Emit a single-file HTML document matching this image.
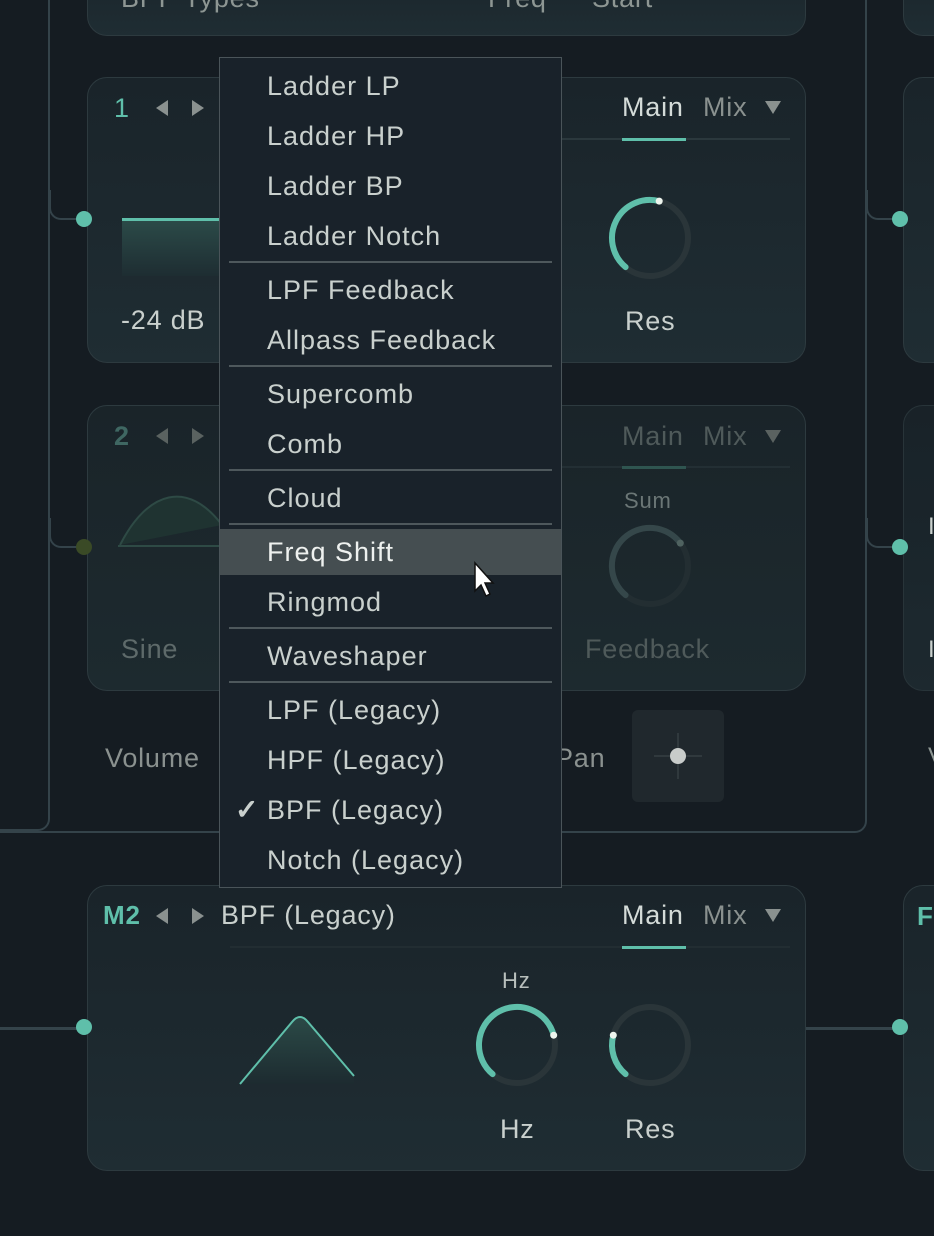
<!DOCTYPE html>
<html><head><meta charset="utf-8"><style>
*{margin:0;padding:0;box-sizing:border-box}
body{width:934px;height:1236px;background:#151c22;position:relative;overflow:hidden;font-family:"Liberation Sans",sans-serif;color:#c9d0cd}
.a{position:absolute}
.card{position:absolute;border:1.5px solid #2d3a3f;border-radius:20px;background:linear-gradient(#1a242a,#1f2d33)}
.t{position:absolute;white-space:nowrap;line-height:1;letter-spacing:0.8px}
.teal{color:#5fbfaa}
.tri{position:absolute;width:0;height:0;border-top:8px solid transparent;border-bottom:8px solid transparent}
.l{border-right:12px solid #8a918f}
.r{border-left:12px solid #8a918f}
.dot{position:absolute;width:16px;height:16px;border-radius:50%;background:#5fbfaa}
.menu{position:absolute;left:219px;top:57px;width:343px;height:831px;background:#19222a;border:1.5px solid #4a5459;padding-top:3px}
.it{height:50px;font-size:27px;letter-spacing:1px;line-height:50px;padding-left:47px;color:#c9d0cd;position:relative}
.sep{height:4px;position:relative}
.sep:before{content:"";position:absolute;left:9px;right:9px;top:0;height:2px;background:#4e585c}
.hl{background:#454e51;color:#eef1ef}
</style></head><body>
<!-- wires -->
<div class="a" style="left:-20px;top:-20px;width:70px;height:851px;border-right:2px solid #34434a;border-bottom:2px solid #34434a;border-bottom-right-radius:12px"></div>
<div class="a" style="left:-20px;top:-20px;width:887px;height:853px;border-right:2px solid #34434a;border-bottom:2px solid #34434a;border-bottom-right-radius:12px"></div>
<div class="a" style="left:49px;top:190px;width:36px;height:30px;border-left:2px solid #34434a;border-bottom:2px solid #34434a;border-bottom-left-radius:12px"></div>
<div class="a" style="left:49px;top:518px;width:36px;height:30px;border-left:2px solid #34434a;border-bottom:2px solid #34434a;border-bottom-left-radius:12px"></div>
<div class="a" style="left:866px;top:190px;width:36px;height:30px;border-left:2px solid #34434a;border-bottom:2px solid #34434a;border-bottom-left-radius:12px"></div>
<div class="a" style="left:866px;top:518px;width:36px;height:30px;border-left:2px solid #34434a;border-bottom:2px solid #34434a;border-bottom-left-radius:12px"></div>
<div class="a" style="left:0;top:1027px;width:84px;height:3px;background:#34434a"></div>
<div class="a" style="left:805px;top:1027px;width:96px;height:3px;background:#34434a"></div>

<!-- top card -->
<div class="card" style="left:87px;top:-40px;width:719px;height:76px"></div>
<div class="t" style="left:121px;top:-15px;font-size:27px;color:#8d9693">BPF Types</div>
<div class="t" style="left:488px;top:-15px;font-size:27px;color:#8d9693">Freq</div>
<div class="t" style="left:592px;top:-15px;font-size:27px;color:#8d9693">Start</div>

<!-- right side cards -->
<div class="card" style="left:903px;top:-40px;width:80px;height:76px"></div>
<div class="card" style="left:903px;top:77px;width:80px;height:286px"></div>
<div class="card" style="left:903px;top:405px;width:80px;height:286px;opacity:.8"></div>
<div class="card" style="left:903px;top:885px;width:80px;height:286px"></div>
<div class="t teal" style="left:917px;top:903px;font-size:26px;font-weight:bold">F</div>
<div class="t" style="left:928px;top:515px;font-size:24px;color:#c9d0cd">I</div>
<div class="t" style="left:928px;top:638px;font-size:24px;color:#c9d0cd">I</div>
<div class="t" style="left:928px;top:745px;font-size:24px;color:#8d9693">V</div>

<!-- card 1 -->
<div class="card" style="left:87px;top:77px;width:719px;height:286px"></div>
<div class="t teal" style="left:114px;top:95px;font-size:27px">1</div>
<div class="tri l" style="left:156px;top:100px"></div>
<div class="tri r" style="left:192px;top:100px"></div>
<div class="a" style="left:122px;top:218px;width:100px;height:3px;background:#5fbfaa"></div>
<div class="a" style="left:122px;top:221px;width:100px;height:55px;background:linear-gradient(#2b4a48,#1e2d32)"></div>
<div class="t" style="left:121px;top:307px;font-size:27px">-24 dB</div>
<div class="t" style="left:622px;top:94px;font-size:27px;color:#d4dbd8">Main</div>
<div class="t" style="left:703px;top:94px;font-size:27px;color:#8a918f">Mix</div>
<div class="a" style="left:765px;top:101px;width:0;height:0;border-left:8px solid transparent;border-right:8px solid transparent;border-top:13px solid #8a918f"></div>
<div class="a" style="left:562px;top:138px;width:228px;height:2px;background:#2b383d"></div>
<div class="a" style="left:622px;top:138px;width:64px;height:3px;background:#5fbfaa"></div>
<svg class="a" style="left:600px;top:188px" width="100" height="100"><circle cx="50" cy="50" r="38" fill="none" stroke="#2a3539" stroke-width="6"/><path d="M25.6 79.1 A38 38 0 0 1 59.2 13.1" fill="none" stroke="#5fbfaa" stroke-width="6" stroke-linecap="round"/><circle cx="59.2" cy="13.1" r="3.5" fill="#eef5ee"/></svg>
<div class="t" style="left:625px;top:308px;font-size:27px">Res</div>
<div class="dot" style="left:76px;top:211px"></div>
<div class="dot" style="left:892px;top:211px"></div>

<!-- card 2 (dim) -->
<div class="card" style="left:87px;top:405px;width:719px;height:286px;background:linear-gradient(#1a2429,#1d2a2f)"></div>
<div class="t" style="left:114px;top:423px;font-size:27px;color:#3f6762;font-weight:bold">2</div>
<div class="tri l" style="left:156px;top:428px;border-right-color:#5a6260"></div>
<div class="tri r" style="left:192px;top:428px;border-left-color:#5a6260"></div>
<svg class="a" style="left:118px;top:485px" width="110" height="65"><path d="M2 60 C30 5 70 -5 104 40" fill="#1f3331" stroke="#2e4a45" stroke-width="2"/><line x1="0" y1="61" x2="104" y2="61" stroke="#2e4a45" stroke-width="2"/></svg>
<div class="t" style="left:121px;top:636px;font-size:27px;color:#5e6a6a">Sine</div>
<div class="t" style="left:622px;top:423px;font-size:27px;color:#4f5a5a">Main</div>
<div class="t" style="left:703px;top:423px;font-size:27px;color:#4f5a5a">Mix</div>
<div class="a" style="left:765px;top:430px;width:0;height:0;border-left:8px solid transparent;border-right:8px solid transparent;border-top:13px solid #5a6260"></div>
<div class="a" style="left:562px;top:466px;width:228px;height:2px;background:#232f34"></div>
<div class="a" style="left:622px;top:466px;width:64px;height:3px;background:#2f5550"></div>
<div class="t" style="left:624px;top:490px;font-size:22px;color:#6b7676">Sum</div>
<svg class="a" style="left:600px;top:516px" width="100" height="100"><circle cx="50" cy="50" r="38" fill="none" stroke="#232e32" stroke-width="6"/><path d="M25.6 79.1 A38 38 0 1 1 80.3 27.1" fill="none" stroke="#35474a" stroke-width="6" stroke-linecap="round"/><circle cx="80.3" cy="27.1" r="3.5" fill="#4f6260"/></svg>
<div class="t" style="left:585px;top:636px;font-size:27px;color:#4f5a5a">Feedback</div>
<div class="dot" style="left:76px;top:539px;background:#3a4a26"></div>
<div class="dot" style="left:892px;top:539px"></div>

<div class="t" style="left:105px;top:745px;font-size:27px;color:#8a918f">Volume</div>
<div class="t" style="left:555px;top:745px;font-size:27px;color:#8a918f">Pan</div>
<div class="a" style="left:632px;top:710px;width:92px;height:92px;background:#20282d;border-radius:6px"></div>
<div class="a" style="left:677px;top:733px;width:2px;height:46px;background:#30393d"></div>
<div class="a" style="left:654px;top:755px;width:48px;height:2px;background:#30393d"></div>
<div class="a" style="left:670px;top:748px;width:16px;height:16px;border-radius:50%;background:#c8ccca"></div>

<!-- M2 card -->
<div class="card" style="left:87px;top:885px;width:719px;height:286px"></div>
<div class="t teal" style="left:103px;top:902px;font-size:26px;font-weight:bold">M2</div>
<div class="tri l" style="left:156px;top:908px"></div>
<div class="tri r" style="left:192px;top:908px"></div>
<div class="t" style="left:221px;top:902px;font-size:27px">BPF (Legacy)</div>
<div class="t" style="left:622px;top:902px;font-size:27px;color:#d4dbd8">Main</div>
<div class="t" style="left:703px;top:902px;font-size:27px;color:#8a918f">Mix</div>
<div class="a" style="left:765px;top:909px;width:0;height:0;border-left:8px solid transparent;border-right:8px solid transparent;border-top:13px solid #8a918f"></div>
<div class="a" style="left:230px;top:946px;width:560px;height:2px;background:#222d32"></div>
<div class="a" style="left:622px;top:946px;width:64px;height:3px;background:#5fbfaa"></div>
<svg class="a" style="left:238px;top:1010px" width="120" height="76"><defs><linearGradient id="g" x1="0" y1="0" x2="0" y2="1"><stop offset="0" stop-color="#2b4a47"/><stop offset="1" stop-color="#1d2b30"/></linearGradient></defs><path d="M2 74 L54 12 Q62 2 70 12 L116 66 L116 74 Z" fill="url(#g)"/><path d="M2 74 L54 12 Q62 2 70 12 L116 66" fill="none" stroke="#5fbfaa" stroke-width="2"/></svg>
<div class="t" style="left:502px;top:970px;font-size:22px;color:#b8bfbc">Hz</div>
<svg class="a" style="left:467px;top:995px" width="100" height="100"><circle cx="50" cy="50" r="38" fill="none" stroke="#2a3539" stroke-width="6"/><path d="M25.6 79.1 A38 38 0 1 1 86.7 40.2" fill="none" stroke="#5fbfaa" stroke-width="6" stroke-linecap="round"/><circle cx="86.7" cy="40.2" r="3.5" fill="#eef5ee"/></svg>
<svg class="a" style="left:600px;top:995px" width="100" height="100"><circle cx="50" cy="50" r="38" fill="none" stroke="#2a3539" stroke-width="6"/><path d="M25.6 79.1 A38 38 0 0 1 13.3 40.2" fill="none" stroke="#5fbfaa" stroke-width="6" stroke-linecap="round"/><circle cx="13.3" cy="40.2" r="3.5" fill="#eef5ee"/></svg>
<div class="t" style="left:500px;top:1116px;font-size:27px">Hz</div>
<div class="t" style="left:625px;top:1116px;font-size:27px">Res</div>
<div class="dot" style="left:76px;top:1019px"></div>
<div class="dot" style="left:892px;top:1019px"></div>

<!-- menu -->
<div class="menu">
<div class="it">Ladder LP</div>
<div class="it">Ladder HP</div>
<div class="it">Ladder BP</div>
<div class="it">Ladder Notch</div>
<div class="sep"></div>
<div class="it">LPF Feedback</div>
<div class="it">Allpass Feedback</div>
<div class="sep"></div>
<div class="it">Supercomb</div>
<div class="it">Comb</div>
<div class="sep"></div>
<div class="it">Cloud</div>
<div class="sep"></div>
<div class="it hl" style="height:46px;line-height:46px;margin:2px 0">Freq Shift</div>
<div class="it">Ringmod</div>
<div class="sep"></div>
<div class="it">Waveshaper</div>
<div class="sep"></div>
<div class="it">LPF (Legacy)</div>
<div class="it">HPF (Legacy)</div>
<div class="it"><span style="position:absolute;left:15px;font-size:28px;font-weight:bold">✓</span>BPF (Legacy)</div>
<div class="it">Notch (Legacy)</div>
</div>
<!-- cursor -->
<svg class="a" style="left:473px;top:561px" width="24" height="38"><path d="M2 2 L2 30 L8 24 L13 35 L17 33 L12 22 L20 22 Z" fill="#fff" stroke="#111" stroke-width="1.5"/></svg>
</body></html>
